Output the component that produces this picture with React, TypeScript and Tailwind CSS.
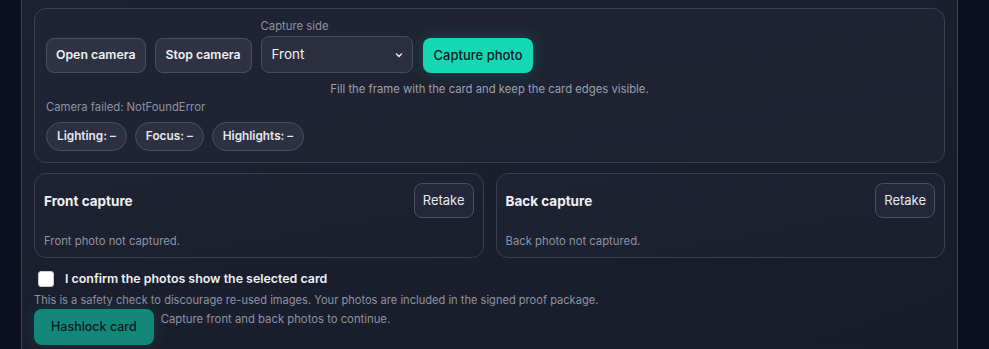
import React from "react";

function Chip({ label }: { label: string }) {
  return (
    <span className="inline-flex h-[29px] items-center rounded-full border border-[#4a4f62] bg-[#2c3041] px-[10px] text-[11.8px] font-semibold text-[#e6e8ee]">
      {label}
    </span>
  );
}

function CaptureCard({ title, empty }: { title: string; empty: string }) {
  return (
    <div className="rounded-xl border border-[#3a3f51] bg-gradient-to-br from-[#1e2232] to-[#1b1f2d] pl-[9px] pr-[9px] pt-[9px] pb-[8px]">
      <div className="flex items-center justify-between">
        <h4 className="text-[13.5px] font-bold leading-5 text-[#eef0f4]">{title}</h4>
        <button className="h-[35px] rounded-lg border border-[#4a4f62] bg-[#23273a] px-[8px] text-[13px] text-[#e6e8ee]">
          Retake
        </button>
      </div>
      <p className="mt-[15px] text-[11.3px] leading-4 text-[#8d93a3]">{empty}</p>
    </div>
  );
}

export default function App() {
  return (
    <div
      className="flex h-[349px] w-[989px] overflow-hidden bg-[#0c0f1f] pl-[21px]"
      style={{ fontFamily: "Inter, 'Noto Sans', sans-serif" }}
    >
      <div className="h-full w-[937px] border-x border-[#3d4254] bg-gradient-to-br from-[#1c2030] to-[#191c2a] px-[12px] pt-[8px]">
        {/* camera controls */}
        <div className="rounded-xl border border-[#3a3f51] bg-gradient-to-br from-[#1f2333] to-[#1e2231] px-[11px] pt-[9px] pb-[11px]">
          <div className="flex items-end gap-[9px]">
            <button className="h-[35px] rounded-lg border border-[#4a4f62] bg-[#2e3243] px-[9px] text-[12.3px] font-semibold text-[#eef0f4]">
              Open camera
            </button>
            <button className="h-[35px] rounded-lg border border-[#4a4f62] bg-[#2e3243] px-[10px] text-[12.3px] font-semibold text-[#eef0f4]">
              Stop camera
            </button>
            <div className="flex flex-col">
              <span className="mb-[2px] text-[11.3px] leading-4 text-[#8d93a3]">Capture side</span>
              <div className="flex h-[37px] w-[152px] items-center justify-between rounded-lg border border-[#474c5e] bg-[#2a2e3f] pl-[10px] pr-[8px] text-[13.5px] text-[#eef0f4]">
                <span>Front</span>
                <svg width="10" height="10" viewBox="0 0 10 10" fill="none">
                  <path d="M2.5 4l2.5 2.5L7.5 4" stroke="#e6e8ee" strokeWidth="1.5" strokeLinecap="round" strokeLinejoin="round" />
                </svg>
              </div>
            </div>
            <button className="ml-px h-[35px] rounded-lg bg-[#14d8b4] px-[11px] text-[13px] font-medium text-[#0e1a1f] shadow-[0_0_18px_rgba(20,216,180,0.22)]">
              Capture photo
            </button>
          </div>
          <p className="mt-[8px] text-center text-[11.3px] leading-4 text-[#9aa0b0]">
            Fill the frame with the card and keep the card edges visible.
          </p>
          <p className="mt-[2px] text-[11.3px] leading-4 text-[#8d93a3]">Camera failed: NotFoundError</p>
          <div className="mt-[7px] flex gap-[8px]">
            <Chip label="Lighting: –" />
            <Chip label="Focus: –" />
            <Chip label="Highlights: –" />
          </div>
        </div>

        {/* captures */}
        <div className="mt-[10px] grid grid-cols-2 gap-[12px]">
          <CaptureCard title="Front capture" empty="Front photo not captured." />
          <CaptureCard title="Back capture" empty="Back photo not captured." />
        </div>

        <label className="mt-[11px] flex h-[20px] items-center gap-[11px] pl-[4px]">
          <span className="h-[16px] w-[16px] rounded-[3px] border border-[#c9ccd3] bg-white" />
          <span className="text-[12.4px] font-semibold text-[#eef0f4]">
            I confirm the photos show the selected card
          </span>
        </label>
        <p className="mt-[3px] text-[11.1px] leading-4 text-[#8d93a3]">
          This is a safety check to discourage re-used images. Your photos are included in the signed proof package.
        </p>
        <div className="mt-px flex items-start gap-[7px]">
          <button className="h-[36px] rounded-lg bg-[#13877a] px-[17px] text-[12.5px] font-medium text-[#0e1a1f] shadow-[0_0_16px_rgba(20,160,140,0.2)]">
            Hashlock card
          </button>
          <span className="mt-[2px] text-[11.3px] leading-4 text-[#8d93a3]">Capture front and back photos to continue.</span>
        </div>
      </div>
    </div>
  );
}
